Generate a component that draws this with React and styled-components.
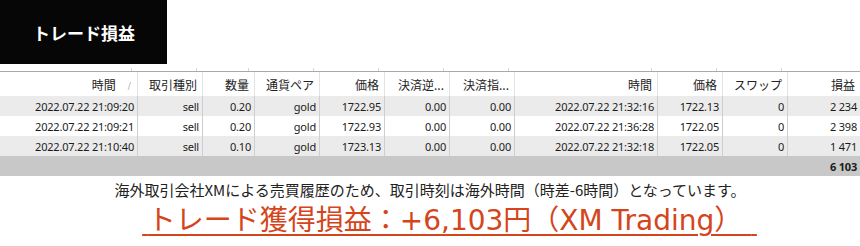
import React from 'react';
import styled, { createGlobalStyle } from 'styled-components';

const GlobalStyle = createGlobalStyle`
  body {
    margin: 0;
    background: #fff;
    font-family: "Noto Sans", "Noto Sans CJK JP", sans-serif;
  }
`;

const columns = '138px 65px 52px 65px 65px 65px 65px 143px 65px 65px 72px';

const headers = ['時間', '取引種別', '数量', '通貨ペア', '価格', '決済逆...', '決済指...', '時間', '価格', 'スワップ', '損益'];

const trades = [
    ['2022.07.22 21:09:20', 'sell', '0.20', 'gold', '1722.95', '0.00', '0.00', '2022.07.22 21:32:16', '1722.13', '0', '2 234'],
    ['2022.07.22 21:09:21', 'sell', '0.20', 'gold', '1722.93', '0.00', '0.00', '2022.07.22 21:36:28', '1722.05', '0', '2 398'],
    ['2022.07.22 21:10:40', 'sell', '0.10', 'gold', '1723.13', '0.00', '0.00', '2022.07.22 21:32:18', '1722.05', '0', '1 471'],
];

const TradeReport = () => {
    return (
        <Page>
            <GlobalStyle />
            <TitleBox>トレード損益</TitleBox>
            <Table>
                <HeaderRow>
                    {headers.map((h, i) => (
                        <HeaderCell key={i}>
                            {h}
                            {i === 0 && <SortMark>/</SortMark>}
                        </HeaderCell>
                    ))}
                </HeaderRow>
                {trades.map((row, r) => (
                    <DataRow key={r} $striped={r % 2 === 0}>
                        {row.map((v, i) => <DataCell key={i}>{v}</DataCell>)}
                    </DataRow>
                ))}
                <TotalRow>
                    <TotalCell>6 103</TotalCell>
                </TotalRow>
            </Table>
            <Note>海外取引会社XMによる売買履歴のため、取引時刻は海外時間（時差-6時間）となっています。</Note>
            <Result>
                <span>{'\u2009'}トレード獲得損益：+6,103円（XM Trading）&nbsp;{'\u2009'}</span>
            </Result>
        </Page>
    )
}

const Page = styled.div`
    width: 860px;
    display: flex;
    flex-direction: column;
`;

const TitleBox = styled.div`
    width: 167px;
    height: 64px;
    box-sizing: border-box;
    padding-left: 33px;
    background: #060606;
    color: #fff;
    font-family: "Noto Sans CJK JP", sans-serif;
    font-size: 17px;
    font-weight: 700;
    display: flex;
    align-items: center;
`;

const Table = styled.div`
    margin-top: 7px;
    border-top: 1px solid #a8a8a8;
    font-size: 11px;
    color: #1b1b1b;
`;

const HeaderRow = styled.div`
    display: grid;
    grid-template-columns: ${columns};
    height: 24px;
`;

//little resize ticks sit above the header line, a bit left of each divider
const HeaderCell = styled.div`
    position: relative;
    display: flex;
    align-items: center;
    justify-content: flex-end;
    padding-right: 5px;
    border-right: 1px solid #e3e3e3;
    font-family: "Noto Sans CJK JP", sans-serif;
    font-size: 12px;
    color: #222;
    white-space: nowrap;
    &:first-child { padding-right: 6px; }
    &:last-child { border-right: none; }
    &::before {
        content: '';
        position: absolute;
        top: -4px;
        right: 5px;
        width: 1px;
        height: 3px;
        background: #d6d6d6;
    }
    &:last-child::before { display: none; }
`;

const SortMark = styled.span`
    margin-left: 12px;
    font-size: 8px;
    color: #888;
`;

const DataRow = styled.div`
    display: grid;
    grid-template-columns: ${columns};
    height: 20px;
    background: ${p => p.$striped ? '#ebebeb' : '#fff'};
`;

const DataCell = styled.div`
    display: flex;
    align-items: center;
    justify-content: flex-end;
    padding-right: 3px;
    border-right: 1px solid #cfcfcf;
    white-space: nowrap;
    letter-spacing: -0.2px;
    &:last-child { border-right: none; }
`;

const TotalRow = styled.div`
    display: flex;
    justify-content: flex-end;
    height: 20px;
    background: #c8c8c8;
`;

const TotalCell = styled.div`
    display: flex;
    align-items: center;
    padding-right: 3px;
    font-weight: 700;
    letter-spacing: -0.2px;
`;

const Note = styled.div`
    margin-top: 3px;
    text-align: center;
    font-family: "Noto Sans CJK JP", sans-serif;
    font-size: 15px;
    line-height: 22px;
    color: #222;
`;

const Result = styled.div`
    text-align: center;
    padding-left: 39px;
    font-family: "DejaVu Sans", "Noto Sans CJK JP", sans-serif;
    font-size: 28px;
    line-height: 40px;
    color: #d4451b;
    span {
        text-decoration: underline;
        text-decoration-thickness: 2px;
        text-underline-offset: 4px;
    }
`;

export default TradeReport;
